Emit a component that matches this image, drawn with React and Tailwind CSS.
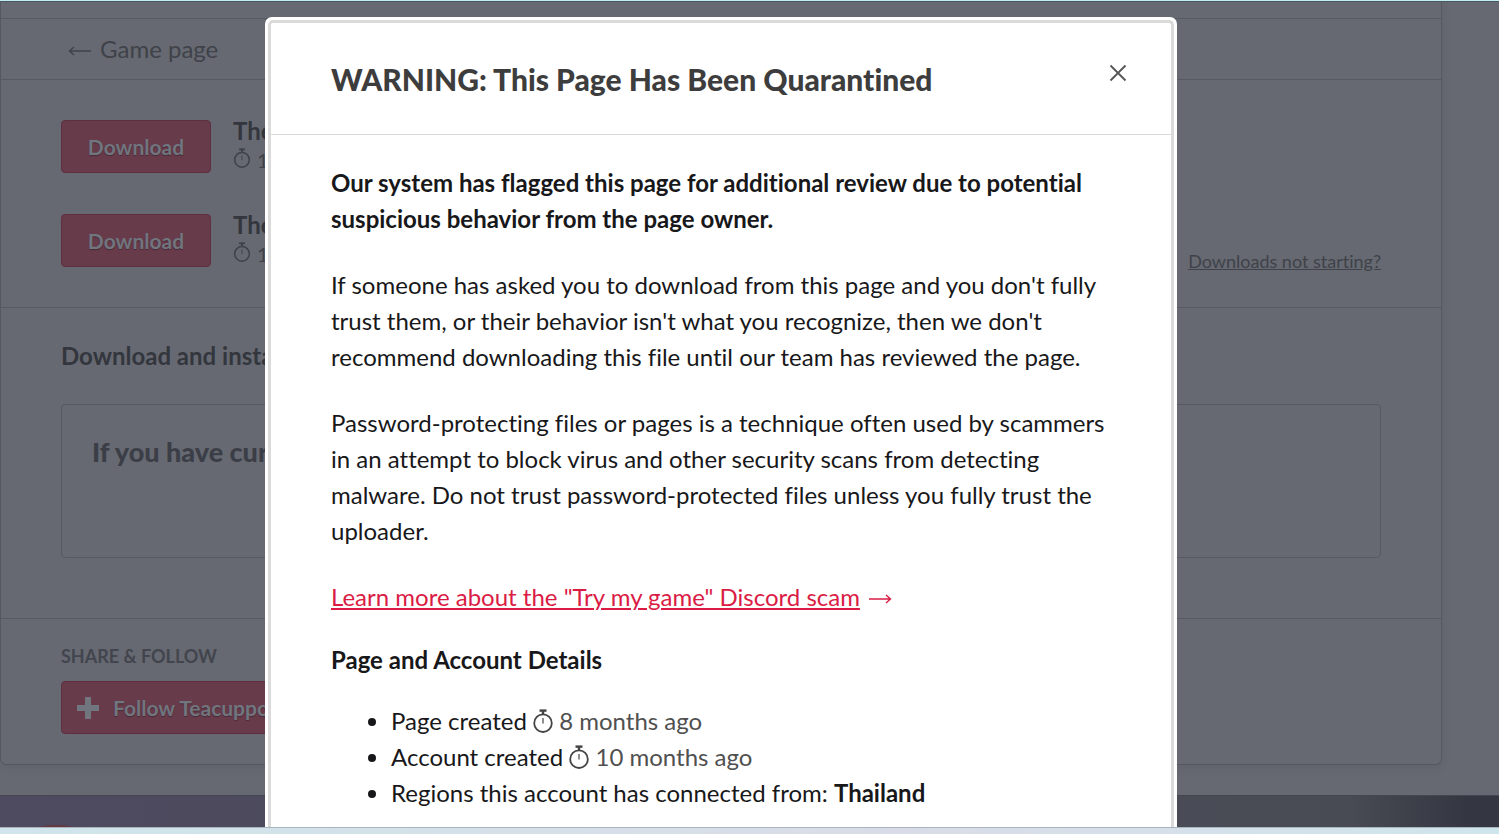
const uploads = [
    {id: 1, name: "The", date: "1"},
    {id: 2, name: "The", date: "1"},
];

const StopwatchIcon = ({className}) => (
    <svg viewBox="0 0 20 24" className={className} fill="none" stroke="currentColor" aria-hidden="true">
        <circle cx="10" cy="14.2" r="8.8" strokeWidth="1.8" />
        <path d="M6.5 1.6h7" strokeWidth="2.4" />
        <path d="M10 2v4" strokeWidth="2.4" />
        <path d="M10 9v5.5" strokeWidth="1.2" />
    </svg>
);

const ArrowIcon = ({className}) => (
    <svg viewBox="0 0 24 14" className={className} fill="none" stroke="currentColor" strokeWidth="1.4" aria-hidden="true">
        <path d="M1 7h21.5M18 3l4.5 4-4.5 4" />
    </svg>
);

const PlusIcon = () => (
    <svg viewBox="0 0 22 22" className="h-[22px] w-[22px]" fill="currentColor" aria-hidden="true">
        <path d="M8 0h6v8h8v6h-8v8H8v-8H0V8h8z" />
    </svg>
);

const redButtonClass = "rounded-[4px] border border-[#5f2f41] bg-[#673b4a] text-[21px] font-bold text-[#70757e] [text-shadow:0_1px_1px_#4a2a38]";

const GamePage = () => (
    <div className="flex flex-1 flex-col">
        <div className="mr-[57px] flex flex-col rounded-b-[6px] border-x border-b border-[#555861] shadow-[0_2px_8px_rgba(50,53,62,0.12)]">
            <div className="h-4" />
            <nav className="flex h-[62px] items-center border-y border-[#575a63] pl-[67px]">
                <a href="#game" className="flex items-center gap-2 text-2xl text-[#3f4249]">
                    <ArrowIcon className="mt-1 h-[14px] w-6 rotate-180" />
                    Game page
                </a>
            </nav>

            <section className="flex items-end justify-between border-b border-[#575a63] px-[60px] pt-10 pb-8">
                <div className="flex flex-col gap-[41px] pb-2">
                    {uploads.map((upload) => (
                        <div key={upload.id} className="flex h-[53px] items-start gap-[22px]">
                            <button type="button" className={`${redButtonClass} h-[53px] w-[150px]`}>Download</button>
                            <div className="-mt-1">
                                <div className="text-2xl leading-[30px] font-bold text-[#33363d]">{upload.name}</div>
                                <div className="flex items-center gap-[6px] text-xl leading-7 text-[#3f4249]">
                                    <StopwatchIcon className="mb-1 h-5 w-[18px]" />
                                    {upload.date}
                                </div>
                            </div>
                        </div>
                    ))}
                </div>
                <a href="#help" className="text-lg leading-7 text-[#3f4249] underline">Downloads not starting?</a>
            </section>

            <section className="border-b border-[#575a63] px-[60px] pt-[30px] pb-[60px]">
                <h2 className="text-2xl leading-9 font-bold text-[#33363d]">Download and install</h2>
                <div className="mt-[30px] h-[154px] rounded-[4px] border border-[#565962] px-[30px] pt-[29px]">
                    <h3 className="text-[27px] leading-9 font-black text-[#3b3e46]">If you have cur</h3>
                </div>
            </section>

            <section className="flex flex-col items-start px-[60px] pt-[22px] pb-[30px]">
                <h2 className="text-lg leading-[30px] font-bold text-[#42454d]">SHARE &amp; FOLLOW</h2>
                <button type="button" className={`${redButtonClass} mt-[10px] flex h-[53px] items-center gap-[14px] px-[15px]`}>
                    <PlusIcon />
                    Follow Teacuppo
                </button>
            </section>
        </div>
    </div>
);

const QuarantineDialog = () => (
    <div
        role="dialog"
        aria-labelledby="quarantine-title"
        className="h-full w-[912px] rounded-t-[7px] bg-white px-[3px] pt-[3px] text-2xl leading-9 text-[#18181a]"
    >
        <div className="h-full rounded-t-[5px] border-x-[3px] border-t-[3px] border-[#dadada]">
            <header className="flex h-28 items-center justify-between border-b border-[#dadada] pr-11 pl-[60px]">
                <h1 id="quarantine-title" className="text-[30px] font-black text-[#3d3d3d]">
                    WARNING: This Page Has Been Quarantined
                </h1>
                <button type="button" aria-label="Close" className="mb-3 text-[#555]">
                    <svg viewBox="0 0 18 18" className="h-[18px] w-[18px]" fill="none" stroke="currentColor" strokeWidth="1.8">
                        <path d="M1.5 1.5l15 15M16.5 1.5l-15 15" />
                    </svg>
                </button>
            </header>

            <div className="px-[60px] pt-[30px]">
                <p className="mb-[30px] font-bold">
                    Our system has flagged this page for additional review due to potential suspicious behavior from the page owner.
                </p>
                <p className="mb-[30px]">
                    If someone has asked you to download from this page and you don't fully trust them, or their behavior isn't what you recognize, then we don't recommend downloading this file until our team has reviewed the page.
                </p>
                <p className="mb-[30px]">
                    Password-protecting files or pages is a technique often used by scammers in an attempt to block virus and other security scans from detecting malware. Do not trust password-protected files unless you fully trust the uploader.
                </p>
                <p className="mb-[30px] flex items-center gap-2 text-[#da1c45]">
                    <a href="#scam" className="underline">Learn more about the "Try my game" Discord scam</a>
                    <ArrowIcon className="mt-1 h-[14px] w-6" />
                </p>
                <h2 className="mb-7 leading-[30px] font-bold">Page and Account Details</h2>
                <ul className="list-disc pl-[60px]">
                    <li>
                        Page created <StopwatchIcon className="mb-[6px] inline-block h-6 w-5 text-[#444]" />{" "}
                        <span className="text-[#505050]">8 months ago</span>
                    </li>
                    <li>
                        Account created <StopwatchIcon className="mb-[6px] inline-block h-6 w-5 text-[#444]" />{" "}
                        <span className="text-[#505050]">10 months ago</span>
                    </li>
                    <li>
                        Regions this account has connected from: <strong className="font-bold">Thailand</strong>
                    </li>
                </ul>
            </div>
        </div>
    </div>
);

export default function App()
{
    return (
        <div className="flex h-screen flex-col overflow-hidden bg-[#d0e3ea] font-[Lato,sans-serif] [font-variant-ligatures:none]">
            <div className="h-px shrink-0 bg-[#bdeef0]" />
            <main className="relative flex min-h-0 flex-1 flex-col overflow-hidden border-t border-[#50545e] bg-[#666971]">
                <GamePage />
                <div className="relative h-8 shrink-0 overflow-hidden border-t border-[#444652] bg-linear-to-r from-[#4e4a60] from-0% via-[#484b54] via-90% to-[#343741] to-98%">
                    <div className="absolute top-[29px] left-2 h-16 w-24 rounded-[50%] bg-[#67383f]" />
                </div>
                <div className="absolute inset-x-0 top-[15px] bottom-0 flex justify-center pr-[57px]">
                    <QuarantineDialog />
                </div>
            </main>
            <div className="h-[7px] shrink-0 border-t border-[#a9b4bd] bg-linear-to-r from-[#cfe5eb] via-[#d9dce8] via-60% to-[#cfe5ec]" />
        </div>
    );
}
